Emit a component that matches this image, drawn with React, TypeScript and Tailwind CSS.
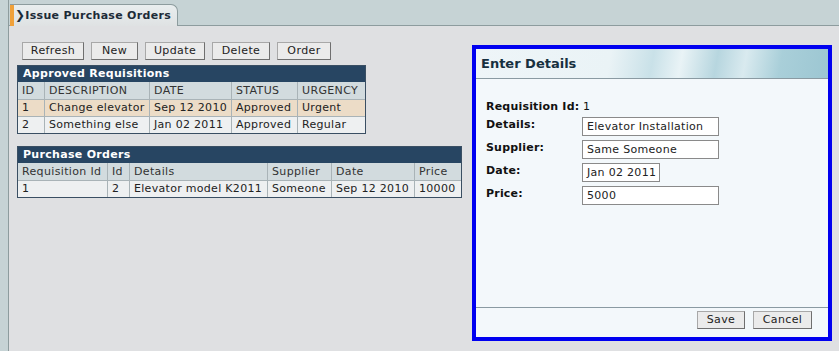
const font = "font-['DejaVu_Sans',Verdana,sans-serif]";

const reqCols = ["ID", "DESCRIPTION", "DATE", "STATUS", "URGENCY"];
const reqRows = [
  ["1", "Change elevator", "Sep 12 2010", "Approved", "Urgent"],
  ["2", "Something else", "Jan 02 2011", "Approved", "Regular"],
];
const poCols = ["Requisition Id", "Id", "Details", "Supplier", "Date", "Price"];
const poRows = [["1", "2", "Elevator model K2011", "Someone", "Sep 12 2010", "10000"]];

function Btn({ label, className = "" }: { label: string; className?: string }) {
  return (
    <button
      className={
        "h-[18px] border border-t-[#a8a8a8] border-l-[#a8a8a8] border-r-[#6f6f6f] border-b-[#6f6f6f] bg-[#ebebeb] text-[11px] leading-[16px] text-[#222] tracking-[0.4px] " +
        className
      }
    >
      {label}
    </button>
  );
}

function Grid({
  title,
  cols,
  rows,
  widths,
  rowBg,
}: {
  title: string;
  cols: string[];
  rows: string[][];
  widths: string;
  rowBg: string[];
}) {
  return (
    <div className="border border-[#3a4f63] w-fit">
      <div className="h-[16px] bg-[#274562] text-white font-bold text-[11px] leading-[16px] pl-[5px] tracking-[0.3px]">
        {title}
      </div>
      <div className={"grid " + widths + " bg-[#d2dbde] border-b border-[#a9b3b7]"}>
        {cols.map((c, i) => (
          <div
            key={c}
            className={
              "h-[17px] leading-[17px] px-[4px] text-[11px] text-[#333] tracking-[0.35px] whitespace-nowrap " +
              (i < cols.length - 1 ? "border-r border-[#a9b3b7]" : "")
            }
          >
            {c}
          </div>
        ))}
      </div>
      {rows.map((r, ri) => (
        <div
          key={ri}
          className={
            "grid " + widths + " " + rowBg[ri] + (ri < rows.length - 1 ? " border-b border-[#a9b3b7]" : "")
          }
        >
          {r.map((c, i) => (
            <div
              key={i}
              className={
                "h-[16px] leading-[16px] px-[4px] text-[11px] text-[#222] tracking-[0.3px] whitespace-nowrap " +
                (i < r.length - 1 ? "border-r border-[#a9b3b7]" : "")
              }
            >
              {c}
            </div>
          ))}
        </div>
      ))}
    </div>
  );
}

function Field({ label, value, w }: { label: string; value: string; w: string }) {
  return (
    <div className="flex h-[23px]">
      <div className="w-[96px] font-bold text-[11px] leading-[14px] pt-[1px] text-[#111] tracking-[0.2px]">{label}</div>
      <div
        className={
          w + " h-[19px] border border-[#8a8a8a] bg-white text-[11px] leading-[17px] px-[4px] text-[#222] tracking-[0.3px] whitespace-nowrap"
        }
      >
        {value}
      </div>
    </div>
  );
}

export default function App() {
  return (
    <div className={"w-[839px] h-[351px] flex bg-[#dfe0e2] overflow-hidden " + font}>
      <div className="w-[9px] shrink-0 bg-[#c6d3d5] border-r border-[#8d9c9e]" />
      <div className="flex-1 flex flex-col">
        <div className="h-[26px] bg-[#c6d3d5] border-b border-[#8d9c9e] flex items-end pl-[1px]">
          <div className="h-[22px] w-[168px] -mb-px flex bg-[linear-gradient(180deg,#e9eeef,#dfe2e3)] border-t border-r border-[#8d9c9e] rounded-tr-[7px]">
            <div className="w-[4px] bg-[#f0a13a]" />
            <div className="pl-[1px] text-[11px] font-bold leading-[21px] text-[#1c2b38] tracking-[0.3px] whitespace-nowrap">
              <span className="font-black text-[12px]">❯</span>Issue Purchase Orders
            </div>
          </div>
        </div>
        <div className="flex items-start">
          <div className="pl-[8px] pt-[16px] w-[455px] shrink-0 flex flex-col">
            <div className="flex pl-[5px]">
              <Btn label="Refresh" className="w-[62px]" />
              <Btn label="New" className="w-[47px] ml-[7px]" />
              <Btn label="Update" className="w-[60px] ml-[7px]" />
              <Btn label="Delete" className="w-[58px] ml-[7px]" />
              <Btn label="Order" className="w-[54px] ml-[7px]" />
            </div>
            <div className="mt-[5px]">
              <Grid
                title="Approved Requisitions"
                cols={reqCols}
                rows={reqRows}
                widths="grid-cols-[27px_105px_82px_66px_67px]"
                rowBg={["bg-[#ecdcc7]", "bg-[#eef0f1]"]}
              />
            </div>
            <div className="mt-[12px]">
              <Grid
                title="Purchase Orders"
                cols={poCols}
                rows={poRows}
                widths="grid-cols-[90px_22px_138px_64px_83px_46px]"
                rowBg={["bg-[#eef0f1]"]}
              />
            </div>
          </div>
          <div className="ml-[8px] mt-[19px] w-[360px] h-[296px] border-[4px] border-[#0000f0] bg-[#f3f8fb] flex flex-col">
            <div className="h-[30px] border-b border-[#8a9aa2] bg-[linear-gradient(100deg,#eef5f8_0%,#eaf3f6_38%,#c9e1e8_50%,#e9f3f6_58%,#b7d6df_68%,#d9eaef_76%,#a9cfd9_86%,#9cc6d2_100%)] pl-[5px] text-[13px] font-bold leading-[29px] text-[#17303f]">
              Enter Details
            </div>
            <div className="flex-1 pl-[10px] pt-[21px]">
              <div className="h-[17px] text-[11px] leading-[14px] text-[#111] tracking-[0.2px]">
                <span className="font-bold">Requisition Id:</span> 1
              </div>
              <Field label="Details:" value="Elevator Installation" w="w-[137px]" />
              <Field label="Supplier:" value="Same Someone" w="w-[137px]" />
              <Field label="Date:" value="Jan 02 2011" w="w-[78px]" />
              <Field label="Price:" value="5000" w="w-[137px]" />
            </div>
            <div className="h-[30px] border-t border-[#8a9aa2] flex justify-end items-start pt-[3px] pr-[16px]">
              <Btn label="Save" className="w-[48px]" />
              <Btn label="Cancel" className="w-[59px] ml-[8px]" />
            </div>
          </div>
        </div>
      </div>
    </div>
  );
}
